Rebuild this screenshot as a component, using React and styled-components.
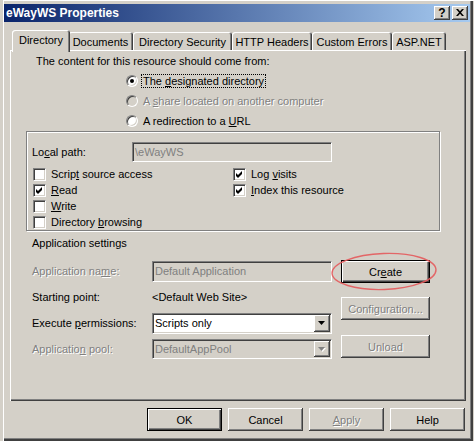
import React from "react";
import styled, { createGlobalStyle, css } from "styled-components";

const FACE = "#d4d0c8";

const GlobalStyle = createGlobalStyle`
  html, body { margin: 0; padding: 0; background: ${FACE}; }
  body {
    font-family: "Liberation Sans", Arial, sans-serif;
    font-size: 11px;
    color: #000;
  }
  * { box-sizing: border-box; }
`;

const disabledText = css`
  color: #808080;
  text-shadow: 1px 1px 0 #fff;
`;

const raised = css`
  box-shadow: inset -1px -1px #404040, inset 1px 1px #fff,
    inset -2px -2px #808080, inset 2px 2px ${FACE};
`;

const sunken = css`
  border: 1px solid;
  border-color: #808080 #fff #fff #808080;
  box-shadow: inset 1px 1px #404040, inset -1px -1px ${FACE};
`;

const Window = styled.div`
  width: 474px;
  height: 441px;
  padding: 4px;
  background: ${FACE};
  display: flex;
  flex-direction: column;
  box-shadow: inset 3px 0 ${FACE}, inset 4px 1px #fff, inset -1px 0 ${FACE},
    inset -3px -2px #404040, inset -4px -3px #808080;
`;

const TitleBar = styled.div`
  height: 18px;
  display: flex;
  align-items: center;
  padding: 0 2px 0 2px;
  background: linear-gradient(to right, #0a246a, #a6caf0);
  color: #fff;
  font-weight: bold;
  font-size: 12px;
`;

const TitleText = styled.div`
  flex: 1;
  line-height: 18px;
  white-space: nowrap;
`;

const TitleButton = styled.div`
  width: 16px;
  height: 14px;
  margin-left: 2px;
  background: ${FACE};
  ${raised};
  display: flex;
  align-items: center;
  justify-content: center;
  color: #000;
  font-size: 12px;
  font-weight: bold;
  line-height: 14px;
  padding-bottom: 1px;
`;

const TabStrip = styled.div`
  display: flex;
  align-items: flex-end;
  height: 20px;
  margin-top: 8px;
  margin-left: 6px;
  padding-left: 4px;
`;

const Tab = styled.div`
  width: ${(p) => p.$w + (p.$active ? 4 : 0)}px;
  height: ${(p) => (p.$active ? 22 : 18)}px;
  margin: ${(p) => (p.$active ? "0 -2px -2px -2px" : "0")};
  position: relative;
  z-index: ${(p) => (p.$active ? 2 : 1)};
  background: ${FACE};
  border-top-left-radius: 3px;
  border-top-right-radius: 3px;
  box-shadow: inset 1px 1px #fff, inset -1px 0 #404040, inset -2px 0 #808080;
  text-align: center;
  padding-top: 3px;
  line-height: 14px;
  white-space: nowrap;
`;

const Panel = styled.div`
  margin-left: 6px;
  width: 456px;
  height: 351px;
  box-shadow: inset 1px 1px #fff, inset -1px -1px #404040,
    inset -2px -2px #808080;
  display: flex;
  flex-direction: column;
`;

const Intro = styled.div`
  margin: 5px 0 0 26px;
  line-height: 13px;
`;

const RadioGroup = styled.div`
  margin: 3px 0 0 116px;
  display: flex;
  flex-direction: column;
`;

const RadioRow = styled.div`
  height: 20px;
  display: flex;
  align-items: center;
`;

const RadioCircle = styled.div`
  width: 12px;
  height: 12px;
  border-radius: 50%;
  ${sunken};
  background: ${(p) => (p.$disabled ? FACE : "#fff")};
  display: flex;
  align-items: center;
  justify-content: center;
  flex: none;
`;

const RadioDot = styled.div`
  width: 4px;
  height: 4px;
  border-radius: 50%;
  background: #000;
`;

const ChoiceLabel = styled.span`
  margin-left: 3px;
  padding: 0 1px;
  line-height: 12px;
  border: 1px dotted ${(p) => (p.$focus ? "#000" : "transparent")};
  white-space: nowrap;
  ${(p) => p.$disabled && disabledText};
`;

const GroupBox = styled.div`
  margin-left: 16px;
  width: 414px;
  height: 100px;
  border: 1px solid #808080;
  box-shadow: 1px 1px 0 #fff, inset 1px 1px 0 #fff;
  padding-left: 5px;
  display: flex;
  flex-direction: column;
`;

const FieldRow = styled.div`
  display: flex;
  align-items: center;
  height: 20px;
  margin-top: 10px;
`;

const FieldLabel = styled.div`
  width: ${(p) => p.$w}px;
  flex: none;
  white-space: nowrap;
  ${(p) => p.$disabled && disabledText};
`;

const TextField = styled.div`
  width: ${(p) => p.$w}px;
  height: ${(p) => p.$h}px;
  ${sunken};
  background: ${(p) => (p.$disabled ? FACE : "#fff")};
  color: ${(p) => (p.$disabled ? "#808080" : "#000")};
  padding-left: 2px;
  display: flex;
  align-items: center;
  white-space: nowrap;
  overflow: hidden;
`;

const CheckGrid = styled.div`
  display: grid;
  grid-template-columns: 200px 1fr;
  grid-auto-rows: 16px;
  margin: 4px 0 0 1px;
`;

const CheckRow = styled.div`
  display: flex;
  align-items: center;
`;

const CheckBox = styled.div`
  width: 13px;
  height: 13px;
  ${sunken};
  background: #fff;
  flex: none;
  position: relative;
`;

const CheckLabel = styled.span`
  margin-left: 5px;
  white-space: nowrap;
`;

const SectionTitle = styled.div`
  margin: 6px 0 0 22px;
  line-height: 13px;
`;

const AppSection = styled.div`
  display: flex;
  margin: 10px 0 0 22px;
`;

const LeftCol = styled.div`
  display: flex;
  flex-direction: column;
  gap: 4px;
  width: 301px;
`;

const AppRow = styled.div`
  display: flex;
  align-items: center;
  height: 22px;
`;

const RightCol = styled.div`
  display: flex;
  flex-direction: column;
  margin-left: 8px;
  width: 89px;
`;

const Button = styled.div`
  width: ${(p) => p.$w}px;
  height: ${(p) => p.$h || 23}px;
  margin-top: ${(p) => p.$mt || 0}px;
  background: ${FACE};
  display: flex;
  align-items: center;
  justify-content: center;
  white-space: nowrap;
  position: relative;
  ${(p) =>
    p.$default
      ? css`
          border: 1px solid #000;
          box-shadow: inset 1px 1px #fff, inset -1px -1px #404040,
            inset -2px -2px #808080;
        `
      : css`
          ${raised};
        `}
  ${(p) => p.$disabled && disabledText};
`;

const Highlight = styled.svg`
  position: absolute;
  left: -12px;
  top: -10px;
  overflow: visible;
  pointer-events: none;
`;

const Select = styled.div`
  width: 180px;
  height: ${(p) => p.$h}px;
  ${sunken};
  padding: 1px;
  background: ${(p) => (p.$disabled ? FACE : "#fff")};
  display: flex;
`;

const SelectText = styled.div`
  flex: 1;
  display: flex;
  align-items: center;
  padding-left: 1px;
  color: ${(p) => (p.$disabled ? "#808080" : "#000")};
  white-space: nowrap;
`;

const DropButton = styled.div`
  width: 16px;
  height: 100%;
  background: ${FACE};
  ${raised};
  display: flex;
  align-items: center;
  justify-content: center;
`;

const ButtonBar = styled.div`
  display: flex;
  justify-content: flex-end;
  gap: 6px;
  margin-top: 7px;
  padding-right: 5px;
`;

function Arrow({ disabled }) {
  return (
    <svg width="8" height="5" viewBox="0 0 8 5" style={{ overflow: "visible" }}>
      {disabled && <polygon points="1,1 8,1 4.5,5" fill="#fff" />}
      <polygon points="0,0 7,0 3.5,4" fill={disabled ? "#808080" : "#000"} />
    </svg>
  );
}

function Radio({ checked, disabled, focus, children }) {
  return (
    <RadioRow>
      <RadioCircle $disabled={disabled}>{checked && <RadioDot />}</RadioCircle>
      <ChoiceLabel $focus={focus} $disabled={disabled}>
        {children}
      </ChoiceLabel>
    </RadioRow>
  );
}

function Check({ checked, children }) {
  return (
    <CheckRow>
      <CheckBox>
        {checked && (
          <svg
            width="11"
            height="11"
            viewBox="0 0 11 11"
            style={{ position: "absolute", left: 0, top: 0 }}
          >
            <polygon points="2,4 4,6 8,2 8,5 4,9 2,7" fill="#000" />
          </svg>
        )}
      </CheckBox>
      <CheckLabel>{children}</CheckLabel>
    </CheckRow>
  );
}

const tabs = [
  ["Directory", 54],
  ["Documents", 65],
  ["Directory Security", 99],
  ["HTTP Headers", 80],
  ["Custom Errors", 80],
  ["ASP.NET", 54],
];

export default function App() {
  return (
    <>
      <GlobalStyle />
      <Window>
        <TitleBar>
          <TitleText>eWayWS Properties</TitleText>
          <TitleButton>?</TitleButton>
          <TitleButton>
            <svg width="8" height="7" viewBox="0 0 8 7">
              <path
                d="M0 0h2l2 2.2L6 0h2L5 3.5 8 7H6L4 4.8 2 7H0l3-3.5z"
                fill="#000"
              />
            </svg>
          </TitleButton>
        </TitleBar>

        <TabStrip>
          {tabs.map(([label, w], i) => (
            <Tab key={label} $w={w} $active={i === 0}>
              {label}
            </Tab>
          ))}
        </TabStrip>

        <Panel>
          <Intro>The content for this resource should come from:</Intro>
          <RadioGroup>
            <Radio checked focus>
              The <u>d</u>esignated directory
            </Radio>
            <Radio disabled>
              A <u>s</u>hare located on another computer
            </Radio>
            <Radio>
              A redirection to a <u>U</u>RL
            </Radio>
          </RadioGroup>

          <GroupBox>
            <FieldRow>
              <FieldLabel $w={100}>
                Lo<u>c</u>al path:
              </FieldLabel>
              <TextField $w={200} $h={20} $disabled>
                \eWayWS
              </TextField>
            </FieldRow>
            <CheckGrid>
              <Check>
                Scrip<u>t</u> source access
              </Check>
              <Check checked>
                Log <u>v</u>isits
              </Check>
              <Check checked>
                <u>R</u>ead
              </Check>
              <Check checked>
                <u>I</u>ndex this resource
              </Check>
              <Check>
                <u>W</u>rite
              </Check>
              <div />
              <Check>
                Directory <u>b</u>rowsing
              </Check>
            </CheckGrid>
          </GroupBox>

          <SectionTitle>Application settings</SectionTitle>
          <AppSection>
            <LeftCol>
              <AppRow>
                <FieldLabel $w={120} $disabled>
                  Application na<u>m</u>e:
                </FieldLabel>
                <TextField $w={180} $h={21} $disabled>
                  Default Application
                </TextField>
              </AppRow>
              <AppRow>
                <FieldLabel $w={120}>Starting point:</FieldLabel>
                <span>&lt;Default Web Site&gt;</span>
              </AppRow>
              <AppRow>
                <FieldLabel $w={120}>
                  Execute <u>p</u>ermissions:
                </FieldLabel>
                <Select $h={21}>
                  <SelectText>Scripts only</SelectText>
                  <DropButton>
                    <Arrow />
                  </DropButton>
                </Select>
              </AppRow>
              <AppRow>
                <FieldLabel $w={120} $disabled>
                  Applicatio<u>n</u> pool:
                </FieldLabel>
                <Select $h={20} $disabled>
                  <SelectText $disabled>DefaultAppPool</SelectText>
                  <DropButton>
                    <Arrow disabled />
                  </DropButton>
                </Select>
              </AppRow>
            </LeftCol>
            <RightCol>
              <Button $w={89} $h={23} $default>
                Cr<u>e</u>ate
                <Highlight width="108" height="42" viewBox="0 0 108 42">
                  <ellipse
                    cx="54"
                    cy="20.5"
                    rx="52"
                    ry="18"
                    fill="none"
                    stroke="#e45a5c"
                    strokeWidth="1.4"
                    opacity="0.9"
                    transform="rotate(-2 54 20.5)"
                  />
                </Highlight>
              </Button>
              <Button $w={89} $h={23} $mt={14} $disabled>
                Configuration...
              </Button>
              <Button $w={89} $h={23} $mt={15} $disabled>
                Unload
              </Button>
            </RightCol>
          </AppSection>
        </Panel>

        <ButtonBar>
          <Button $w={75} $default>
            OK
          </Button>
          <Button $w={75}>Cancel</Button>
          <Button $w={75} $disabled>
            <u>A</u>pply
          </Button>
          <Button $w={75}>Help</Button>
        </ButtonBar>
      </Window>
    </>
  );
}
